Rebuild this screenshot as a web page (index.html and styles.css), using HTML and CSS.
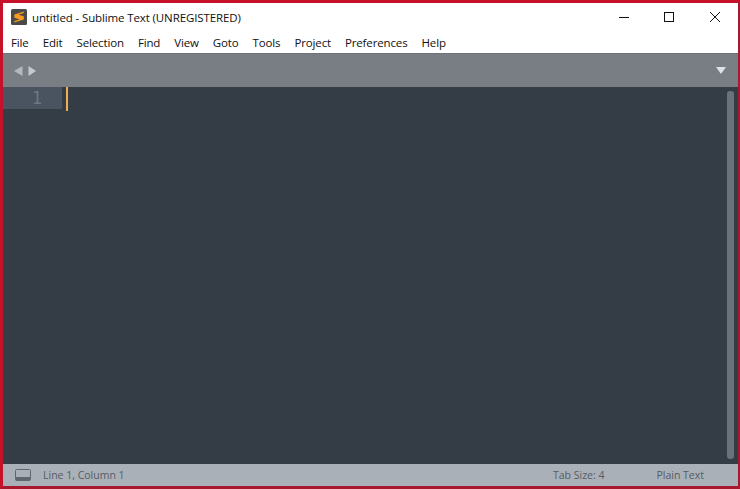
FILE: index.html
```html
<!DOCTYPE html>
<html lang="en">
<head>
<meta charset="utf-8">
<title>untitled - Sublime Text (UNREGISTERED)</title>
<link rel="stylesheet" href="styles.css">
</head>
<body>
<div class="window">
  <header class="titlebar">
    <svg class="app-icon" width="16" height="16" viewBox="0 0 16 16">
      <rect width="16" height="16" rx="1.5" fill="#4a4a48"/>
      <path d="M12.800 2.500 3.400 5.400v3.400l5.200 1.600-5.200 1.700v1.500l9.400-3V7.300L7.500 5.700l5.300-1.600z" fill="#f79a1e"/>
    </svg>
    <span class="title">untitled - Sublime Text (UNREGISTERED)</span>
    <div class="controls">
      <svg class="ctl" width="46" height="27" viewBox="0 0 46 27"><path d="M19 14.500h10" stroke="#111" fill="none"/></svg>
      <svg class="ctl" width="46" height="27" viewBox="0 0 46 27"><rect x="18.500" y="9.500" width="9" height="9" stroke="#111" fill="none"/></svg>
      <svg class="ctl" width="46" height="27" viewBox="0 0 46 27"><path d="M18 9l10 10M28 9 18 19" stroke="#111" fill="none"/></svg>
    </div>
  </header>
  <nav class="menubar">
    <span>File</span><span>Edit</span><span>Selection</span><span>Find</span><span>View</span><span>Goto</span><span>Tools</span><span>Project</span><span>Preferences</span><span>Help</span>
  </nav>
  <div class="tabbar">
    <div class="arrows">
      <svg width="9" height="10" viewBox="0 0 9 10"><path d="M8.500 0v10L0 5z" fill="#b4b9bf"/></svg>
      <svg width="8" height="10" viewBox="0 0 8 10"><path d="M.5 0v10L8 5z" fill="#c6cacf"/></svg>
    </div>
    <svg class="dropdown" width="10" height="7" viewBox="0 0 10 7"><path d="M0 0h10L5 7z" fill="#dfe2e5"/></svg>
  </div>
  <main class="editor">
    <div class="line">
      <div class="gutter">1</div>
      <div class="caret"></div>
    </div>
    <div class="scrollbar"></div>
  </main>
  <footer class="statusbar">
    <svg class="panel-icon" width="16" height="12" viewBox="0 0 16 12">
      <rect x=".5" y=".5" width="15" height="11" rx="1" fill="none" stroke="#5f666e"/>
      <rect x="1" y="8" width="14" height="3.500" fill="#5f666e"/>
    </svg>
    <span class="pos">Line 1, Column 1</span>
    <span class="tabsize">Tab Size: 4</span>
    <span class="syntax">Plain Text</span>
  </footer>
</div>
</body>
</html>
```
FILE: styles.css
```css
* { box-sizing: border-box; }
html, body { margin: 0; padding: 0; height: 100%; }
body { background: #b3172d; overflow: hidden; }
.window {
  width: 740px;
  height: 489px;
  border: solid #c5122a;
  border-width: 3px 2px 3px 3px;
  border-bottom-color: #a8182f;
  border-right-color: #a8182f;
  display: flex;
  flex-direction: column;
  font-family: "Open Sans", "Noto Sans", sans-serif;
  overflow: hidden;
}
.titlebar {
  height: 27px;
  flex: none;
  background: #fff;
  display: flex;
  align-items: center;
  padding-left: 8px;
}
.app-icon { flex: none; margin-top: 1px; }
.title { margin: 1px 0 0 5px; font-size: 11.500px; letter-spacing: -0.120px; color: #111; white-space: nowrap; }
.controls { margin-left: auto; display: flex; flex: none; }
.ctl { display: block; }
.menubar {
  height: 23px;
  flex: none;
  background: #fff;
  display: flex;
  align-items: center;
  padding: 2px 0 0 8px;
  gap: 14px;
  font-size: 11.500px;
  letter-spacing: -0.140px;
  color: #111;
}
.tabbar {
  height: 34px;
  flex: none;
  background: #797e85;
  border-top: 1px solid #6e7379;
  display: flex;
  align-items: center;
  justify-content: space-between;
  padding: 0 12px 0 11px;
}
.arrows { display: flex; gap: 5px; }
.arrows svg, .dropdown { display: block; }
.editor {
  flex: 1;
  background: #343d46;
  display: flex;
  justify-content: space-between;
  min-height: 0;
}
.line { display: flex; height: 24px; }
.gutter {
  width: 59px;
  height: 22px;
  background: #495460;
  color: #6d7882;
  font: 17px/22px "DejaVu Sans Mono", monospace;
  text-align: right;
  padding-right: 20px;
}
.caret { width: 2px; height: 24px; margin-left: 4px; background: #f0ad55; }
.scrollbar {
  width: 7px;
  margin: 4px 4px 5px 0;
  background: #69717a;
  border-radius: 3px;
}
.statusbar {
  height: 22px;
  flex: none;
  background: #aab0b8;
  display: flex;
  align-items: center;
  font-size: 10.500px;
  color: #565c64;
  padding-left: 12px;
}
.panel-icon { flex: none; }
.pos { margin-left: 12px; }
.tabsize { margin-left: auto; }
.syntax { margin-left: 52px; margin-right: 34px; }
```
